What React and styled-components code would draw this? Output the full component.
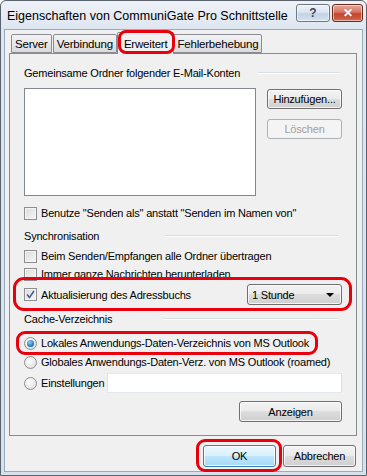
import React from 'react';
import styled, { createGlobalStyle } from 'styled-components';

const Global = createGlobalStyle`
  html, body { margin: 0; padding: 0; background: #ffffff; }
  body { font-family: "Liberation Sans", Arial, sans-serif; font-size: 11px; color: #000; }
  * { box-sizing: border-box; }
`;

const Window = styled.div`
  position: relative;
  width: 367px;
  height: 476px;
  border: 1px solid #59626d;
  border-radius: 6px 6px 0 0;
  background: linear-gradient(#eef2f7, #dde6f0 28px, #d6e1ee);
  display: flex;
  flex-direction: column;
  overflow: hidden;
`;

const TitleBar = styled.div`
  height: 28px;
  display: flex;
  align-items: flex-start;
  padding: 0 3px 0 6px;
`;

const Title = styled.div`
  flex: 1;
  font-size: 12.5px;
  line-height: 14px;
  margin-top: 8px;
  color: #000;
`;

const TitleButtons = styled.div`
  display: flex;
  gap: 2px;
  margin-top: 3px;
`;

const CaptionButton = styled.div`
  width: ${p => p.$w}px;
  height: 18px;
  border: 1px solid ${p => (p.$close ? '#6b2a1c' : '#6d7886')};
  border-radius: 3px;
  background: ${p =>
    p.$close
      ? 'linear-gradient(#e9a99a, #d47461 45%, #c2432a 55%, #d2674d)'
      : 'linear-gradient(#eef3f9, #dbe5f0 45%, #c3d2e3 55%, #d5e1ee)'};
  box-shadow: inset 0 0 0 1px rgba(255,255,255,0.55);
  display: flex;
  align-items: center;
  justify-content: center;
  color: ${p => (p.$close ? '#fff' : '#3b4656')};
  font-size: 12px;
  font-weight: bold;
`;

const Content = styled.div`
  flex: 1;
  margin: 0 3px 3px 3px;
  background: #f0f0f0;
  border: 1px solid #99aabb;
  display: flex;
  flex-direction: column;
  padding: 1px 5px 0 4px;
`;

const TabStrip = styled.div`
  height: 22px;
  display: flex;
  align-items: flex-end;
  padding-left: 2px;
  position: relative;
  z-index: 1;
`;

const Tab = styled.div`
  height: ${p => (p.$active ? 22 : 19)}px;
  padding: 0 ${p => (p.$active ? 6 : 3)}px;
  margin: 0 ${p => (p.$active ? -1 : 1)}px ${p => (p.$active ? -1 : 0)}px ${p => (p.$active ? -1 : 0)}px;
  border: 1px solid #898c95;
  border-bottom: ${p => (p.$active ? 'none' : '1px solid #898c95')};
  border-radius: 2px 2px 0 0;
  background: ${p => (p.$active ? '#f0f0f0' : 'linear-gradient(#f3f3f3, #e8e8e8 50%, #dadada)')};
  display: flex;
  align-items: center;
  padding-top: ${p => (p.$active ? 0 : 1)}px;
  position: relative;
  z-index: ${p => (p.$active ? 2 : 1)};
  white-space: nowrap;
  font-size: 11.5px;
  letter-spacing: -0.2px;
`;

const Panel = styled.div`
  border: 1px solid #898c95;
  background: #f0f0f0;
  padding: 12px 14px 13px 14px;
  display: flex;
  flex-direction: column;
  height: 383px;
`;

const Row = styled.div`
  display: flex;
  align-items: center;
  height: ${p => p.$h || 14}px;
  margin-top: ${p => p.$mt || 0}px;
  white-space: nowrap;
`;

const Label = styled.span`
  line-height: 14px;
  letter-spacing: -0.2px;
  color: ${p => (p.$disabled ? '#a0a0a0' : '#000')};
`;

const GroupLine = styled.div`
  margin-left: auto;
  margin-right: ${p => p.$mr}px;
  width: ${p => p.$w}px;
  height: 1px;
  background: #d5dfe5;
  border-bottom: 1px solid #fff;
  box-sizing: content-box;
`;

const ListRow = styled.div`
  display: flex;
  margin-top: 8px;
  gap: 11px;
`;

const ListBox = styled.div`
  width: 233px;
  height: 108px;
  background: #fff;
  border: 1px solid #828790;
`;

const ButtonColumn = styled.div`
  display: flex;
  flex-direction: column;
  gap: 10px;
  padding-top: 1px;
`;

const Button = styled.div`
  width: ${p => p.$w}px;
  height: ${p => p.$h || 21}px;
  border: 1px solid ${p => (p.$disabled ? '#adb2b5' : p.$default ? '#3c7fb1' : '#707070')};
  border-radius: 3px;
  background: ${p =>
    p.$disabled
      ? '#f4f4f4'
      : p.$default
      ? 'linear-gradient(#eaf6fd, #d9f0fc 50%, #bee6fd 50%, #a7d9f5)'
      : 'linear-gradient(#f2f2f2, #ebebeb 50%, #dddddd 50%, #cfcfcf)'};
  box-shadow: ${p => (p.$disabled ? 'none' : 'inset 0 0 0 1px rgba(255,255,255,0.75)')};
  display: flex;
  align-items: center;
  justify-content: center;
  color: ${p => (p.$disabled ? '#a0a0a0' : '#000')};
  letter-spacing: -0.2px;
  white-space: nowrap;
`;

const Checkbox = styled.div`
  width: 13px;
  height: 13px;
  border: 1px solid #8e8f8f;
  background: linear-gradient(135deg, #dcdcdc, #f6f6f6);
  box-shadow: inset 0 0 0 1px #f4f4f4;
  margin-right: 4px;
  flex: none;
  display: flex;
  align-items: center;
  justify-content: center;
`;

const Radio = styled.div`
  width: 13px;
  height: 13px;
  border-radius: 50%;
  border: 1px solid #8e8f8f;
  background: radial-gradient(circle at 40% 35%, #ffffff, #d6d6d6);
  margin-right: 4px;
  flex: none;
  display: flex;
  align-items: center;
  justify-content: center;
`;

const RadioDot = styled.div`
  width: 7px;
  height: 7px;
  border-radius: 50%;
  background: radial-gradient(circle at 40% 35%, #8fd3f7, #1b6fb3 70%, #0d4a85);
`;

const Combo = styled.div`
  margin-left: auto;
  width: 95px;
  height: 21px;
  border: 1px solid #707070;
  border-radius: 3px;
  background: linear-gradient(#f2f2f2, #ebebeb 50%, #dddddd 50%, #cfcfcf);
  box-shadow: inset 0 0 0 1px rgba(255,255,255,0.75);
  display: flex;
  align-items: center;
  padding: 0 7px 0 4px;
  letter-spacing: -0.2px;
`;

const ComboArrow = styled.span`
  margin-left: auto;
  width: 0;
  height: 0;
  border-left: 4px solid transparent;
  border-right: 4px solid transparent;
  border-top: 4px solid #000;
`;

const TextBox = styled.div`
  margin-left: auto;
  width: 235px;
  height: 20px;
  background: #fff;
  border: 1px solid #abadb3;
  border-top-color: #e3e9ef;
  border-left-color: #e2e3ea;
  border-right-color: #dbdfe6;
  border-bottom-color: #e3e9ef;
`;

const RightRow = styled.div`
  display: flex;
  justify-content: flex-end;
  margin-top: ${p => p.$mt}px;
`;

const Footer = styled.div`
  display: flex;
  justify-content: flex-end;
  gap: 7px;
  margin-top: 9px;
  padding-right: 1px;
`;

const Mark = styled.div`
  position: absolute;
  left: ${p => p.$x}px;
  top: ${p => p.$y}px;
  width: ${p => p.$w}px;
  height: ${p => p.$h}px;
  border: 3px solid #e8000c;
  border-radius: ${p => p.$r}px;
  pointer-events: none;
  z-index: 10;
`;

const Check = () => (
  <svg width="9" height="9" viewBox="0 0 9 9">
    <path d="M1 4.5 L3.5 7.5 L8 1" fill="none" stroke="#4a5f97" strokeWidth="1.6" />
  </svg>
);

export default function App() {
  return (
    <>
      <Global />
      <Window>
        <TitleBar>
          <Title>Eigenschaften von CommuniGate Pro Schnittstelle</Title>
          <TitleButtons>
            <CaptionButton $w={34}>?</CaptionButton>
            <CaptionButton $w={31} $close>✕</CaptionButton>
          </TitleButtons>
        </TitleBar>
        <Content>
          <TabStrip>
            <Tab>Server</Tab>
            <Tab>Verbindung</Tab>
            <Tab $active>Erweitert</Tab>
            <Tab>Fehlerbehebung</Tab>
          </TabStrip>
          <Panel>
            <Row>
              <Label>Gemeinsame Ordner folgender E-Mail-Konten</Label>
              <GroupLine $w={82} $mr={2} />
            </Row>
            <ListRow>
              <ListBox />
              <ButtonColumn>
                <Button $w={75} $h={20}>Hinzufügen...</Button>
                <Button $w={75} $h={20} $disabled>Löschen</Button>
              </ButtonColumn>
            </ListRow>
            <Row $mt={10}>
              <Checkbox />
              <Label>Benutze "Senden als" anstatt "Senden im Namen von"</Label>
            </Row>
            <Row $mt={9}>
              <Label>Synchronisation</Label>
              <GroupLine $w={173} $mr={4} />
            </Row>
            <Row $mt={6}>
              <Checkbox />
              <Label>Beim Senden/Empfangen alle Ordner übertragen</Label>
            </Row>
            <Row $mt={4}>
              <Checkbox />
              <Label>Immer ganze Nachrichten herunterladen</Label>
            </Row>
            <Row $mt={3} $h={21}>
              <Checkbox><Check /></Checkbox>
              <Label>Aktualisierung des Adressbuchs</Label>
              <Combo>
                1 Stunde
                <ComboArrow />
              </Combo>
            </Row>
            <Row $mt={7}>
              <Label>Cache-Verzeichnis</Label>
              <GroupLine $w={175} $mr={4} />
            </Row>
            <Row $mt={10}>
              <Radio><RadioDot /></Radio>
              <Label>Lokales Anwendungs-Daten-Verzeichnis von MS Outlook</Label>
            </Row>
            <Row $mt={5}>
              <Radio />
              <Label>Globales Anwendungs-Daten-Verz. von MS Outlook (roamed)</Label>
            </Row>
            <Row $mt={4} $h={20}>
              <Radio />
              <Label>Einstellungen</Label>
              <TextBox />
            </Row>
            <RightRow $mt={8}>
              <Button $w={103}>Anzeigen</Button>
            </RightRow>
          </Panel>
          <Footer>
            <Button $w={73} $h={22} $default>OK</Button>
            <Button $w={73} $h={22}>Abbrechen</Button>
          </Footer>
        </Content>
        <Mark $x={117} $y={29} $w={57} $h={24} $r={8} />
        <Mark $x={12} $y={276} $w={339} $h={34} $r={11} />
        <Mark $x={15} $y={330} $w={302} $h={24} $r={9} />
        <Mark $x={195} $y={438} $w={86} $h={33} $r={9} />
      </Window>
    </>
  );
}
